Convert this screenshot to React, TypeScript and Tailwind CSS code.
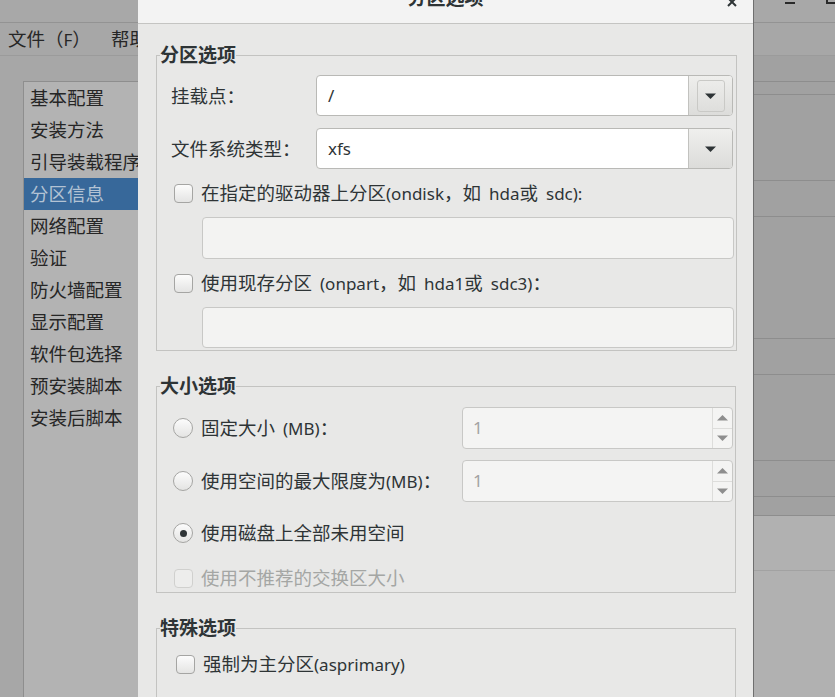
import React from "react";

const CJK = /[\u3000-\u9fff\uff00-\uffef]/;

function T({ s }: { s: string }) {
  const parts = s.split(/([\u3000-\u9fff\uff00-\uffef]+| )/).filter((p) => p !== "");
  return (
    <>
      {parts.map((p, i) =>
        p === " " ? (
          <span key={i} className="inline-block w-[8px]" />
        ) : CJK.test(p) ? (
          <span key={i} className="text-[18.5px]">
            {p}
          </span>
        ) : (
          <span key={i} className="text-[17px]">
            {p}
          </span>
        )
      )}
    </>
  );
}

function Caret({ color = "#2e3436" }: { color?: string }) {
  return (
    <svg width="11" height="6" viewBox="0 0 11 6">
      <path d="M0 0.5h11L5.5 6z" fill={color} />
    </svg>
  );
}

function CaretUp({ color = "#8e8e8e" }: { color?: string }) {
  return (
    <svg width="11" height="6" viewBox="0 0 11 6">
      <path d="M0 5.5h11L5.5 0z" fill={color} />
    </svg>
  );
}

function Combo({ value, focused }: { value: string; focused?: boolean }) {
  return (
    <div className="flex h-[41px] w-[417px] overflow-hidden rounded-[4px] border border-[#b9b9b6] bg-white">
      <div className="flex flex-1 items-center pl-[11px] text-[17px]">{value}</div>
      <div className="flex w-[44px] items-center justify-center border-l border-[#c2c2bf] bg-linear-to-b from-[#efefed] to-[#dcdcda]">
        {focused ? (
          <div className="flex h-[32px] w-[28px] items-center justify-center rounded-[3px] border border-[#c9c9c6]">
            <Caret />
          </div>
        ) : (
          <Caret />
        )}
      </div>
    </div>
  );
}

function Entry({ h }: { h: string }) {
  return (
    <div
      className={
        h === "42"
          ? "ml-[31px] h-[42px] w-[532px] rounded-[4px] border border-[#c8c8c6] bg-[#f3f3f2]"
          : "ml-[31px] h-[41px] w-[532px] rounded-[4px] border border-[#c8c8c6] bg-[#f3f3f2]"
      }
    />
  );
}

function Spin() {
  return (
    <div className="flex h-[42px] w-[271px] overflow-hidden rounded-[4px] border border-[#c8c8c6] bg-[#f4f4f3]">
      <div className="flex flex-1 items-center pl-[10px] text-[17px] text-[#a2a2a2]">1</div>
      <div className="flex w-[20px] flex-col border-l border-[#dddddb]">
        <div className="flex flex-1 items-center justify-center border-b border-[#dddddb]">
          <CaretUp />
        </div>
        <div className="flex flex-1 items-center justify-center">
          <Caret color="#8e8e8e" />
        </div>
      </div>
    </div>
  );
}

function Check({ disabled }: { disabled?: boolean }) {
  return (
    <div
      className={
        disabled
          ? "h-[19px] w-[19px] shrink-0 rounded-[4px] border border-[#d0d0ce] bg-[#ededec]"
          : "h-[19px] w-[19px] shrink-0 rounded-[4px] border border-[#a5a5a3] bg-linear-to-b from-[#fcfcfc] to-[#e4e4e3]"
      }
    />
  );
}

function Radio({ checked }: { checked?: boolean }) {
  return (
    <div className="flex h-[20px] w-[20px] shrink-0 items-center justify-center rounded-full border border-[#a5a5a3] bg-linear-to-b from-[#fcfcfc] to-[#e4e4e3]">
      {checked && <div className="h-[7px] w-[7px] rounded-full bg-[#2e3436]" />}
    </div>
  );
}

function Frame({ title, children }: { title: string; children: React.ReactNode }) {
  return (
    <fieldset className="ml-[18px] w-[580px] shrink-0 border border-[#c3c3c1] pl-[3px] pr-[2px]">
      <legend className="px-0 text-[19px] leading-[20px] font-bold text-[#2e3436]">{title}</legend>
      {children}
    </fieldset>
  );
}

const sidebar = [
  "基本配置",
  "安装方法",
  "引导装载程序",
  "分区信息",
  "网络配置",
  "验证",
  "防火墙配置",
  "显示配置",
  "软件包选择",
  "预安装脚本",
  "安装后脚本",
];

export default function App() {
  return (
    <div className="relative h-[697px] w-[835px] overflow-hidden bg-[#a7a7a7] font-['Noto_Sans','Noto_Sans_CJK_SC',sans-serif] text-[#2e3436]">
      {/* background window */}
      <div className="flex h-full flex-col">
        <div className="flex h-[23px] shrink-0 items-start justify-end gap-[31px] border-b border-[#939393] bg-[#a8a8a8]">
          <div className="mt-[2px] h-[2px] w-[10px] bg-[#2a2a2a]" />
          <div className="-mt-[6px] -mr-[3px] h-[10px] w-[12px] border-2 border-[#2a2a2a]" />
        </div>
        <div className="flex h-[33px] shrink-0 items-center border-b border-[#9b9b9b] pl-[8px] text-[#262626]">
          <span className="w-[103px]">
            <T s="文件（F）" />
          </span>
          <span>
            <T s="帮助(H)" />
          </span>
        </div>
        <div className="flex flex-1">
          <div className="pl-[23px] pt-[25px]">
            <div className="h-[700px] w-[300px] border-t border-l border-[#8e8e8e] bg-[#b3b3b3]">
              {sidebar.map((s) => (
                <div
                  key={s}
                  className={
                    s === "分区信息"
                      ? "flex h-[32px] items-center bg-[#37689a] pl-[6px] text-[18.5px] text-[#b3c3d4]"
                      : "flex h-[32px] items-center pl-[6px] text-[18.5px] text-[#262626]"
                  }
                >
                  {s}
                </div>
              ))}
            </div>
          </div>
          <div className="flex-1" />
          <div className="flex w-[81px] flex-col bg-[#a1a1a1]">
            <div className="h-[26px] border-b border-[#8d8d8d]" />
            <div className="h-[13px] border-b border-[#8d8d8d]" />
            <div className="h-[86px] border-b border-[#8d8d8d]" />
            <div className="h-[36px] border-b border-[#8d8d8d]" />
            <div className="h-[122px] border-b border-[#8d8d8d]" />
            <div className="h-[36px] border-b border-[#8d8d8d]" />
            <div className="h-[86px] border-b border-[#8d8d8d]" />
            <div className="h-[36px] border-b border-[#8d8d8d]" />
            <div className="h-[19px] border-b border-[#8d8d8d]" />
            <div className="h-[55px] border-b border-[#a2a2a2] bg-[#b1b1b1]" />
            <div className="flex-1 bg-[#b1b1b1]" />
          </div>
        </div>
      </div>

      {/* dialog */}
      <div className="absolute top-0 left-[138px] flex h-[697px] w-[616px] flex-col overflow-hidden border-r border-[#6f6f6f] bg-[#e8e8e7]">
        <div className="relative h-[24px] shrink-0 overflow-hidden border-b border-[#c4c4c2] bg-[#f3f3f3]">
          <div className="-mt-[12px] text-center text-[19px] leading-[20px] font-bold text-[#2e3436]">分区选项</div>
          <svg className="absolute top-[-3px] right-[16px]" width="10" height="10" viewBox="0 0 10 10">
            <path d="M1 1L9 9M9 1L1 9" stroke="#2e3436" strokeWidth="2" />
          </svg>
        </div>

        <div className="flex flex-col pt-[21px]">
          <Frame title="分区选项">
            <div className="flex flex-col pt-[10px] pb-[2px] pl-[11px]">
              <div className="flex items-center">
                <div className="w-[145px]">
                  <T s="挂载点：" />
                </div>
                <Combo value="/" focused />
              </div>
              <div className="mt-[12px] flex items-center">
                <div className="w-[145px]">
                  <T s="文件系统类型：" />
                </div>
                <Combo value="xfs" />
              </div>
              <div className="flex h-[48px] items-center gap-[8px] pl-[3px]">
                <Check />
                <span>
                  <T s="在指定的驱动器上分区(ondisk，如 hda或 sdc):" />
                </span>
              </div>
              <Entry h="42" />
              <div className="flex h-[48px] items-center gap-[8px] pl-[3px]">
                <Check />
                <span>
                  <T s="使用现存分区 (onpart，如 hda1或 sdc3)：" />
                </span>
              </div>
              <Entry h="41" />
            </div>
          </Frame>

          <div className="mt-[25px]">
            <Frame title="大小选项">
              <div className="flex flex-col pt-[11px] pl-[11px]">
                <div className="flex items-center">
                  <div className="flex flex-1 items-center gap-[8px] pl-[2px]">
                    <Radio />
                    <span>
                      <T s="固定大小 (MB)：" />
                    </span>
                  </div>
                  <Spin />
                </div>
                <div className="mt-[11px] flex items-center">
                  <div className="flex flex-1 items-center gap-[8px] pl-[2px]">
                    <Radio />
                    <span>
                      <T s="使用空间的最大限度为(MB)：" />
                    </span>
                  </div>
                  <Spin />
                </div>
                <div className="flex h-[62px] items-center gap-[8px] pl-[2px]">
                  <Radio checked />
                  <span>
                    <T s="使用磁盘上全部未用空间" />
                  </span>
                </div>
                <div className="flex h-[28px] items-center gap-[8px] pl-[3px] text-[#a4a6a4]">
                  <Check disabled />
                  <span>
                    <T s="使用不推荐的交换区大小" />
                  </span>
                </div>
              </div>
            </Frame>
          </div>

          <div className="mt-[25px]">
            <Frame title="特殊选项">
              <div className="flex flex-col pt-[2px] pb-[60px] pl-[16px]">
                <div className="flex h-[48px] items-center gap-[8px]">
                  <Check />
                  <span>
                    <T s="强制为主分区(asprimary)" />
                  </span>
                </div>
              </div>
            </Frame>
          </div>
        </div>
      </div>
    </div>
  );
}
